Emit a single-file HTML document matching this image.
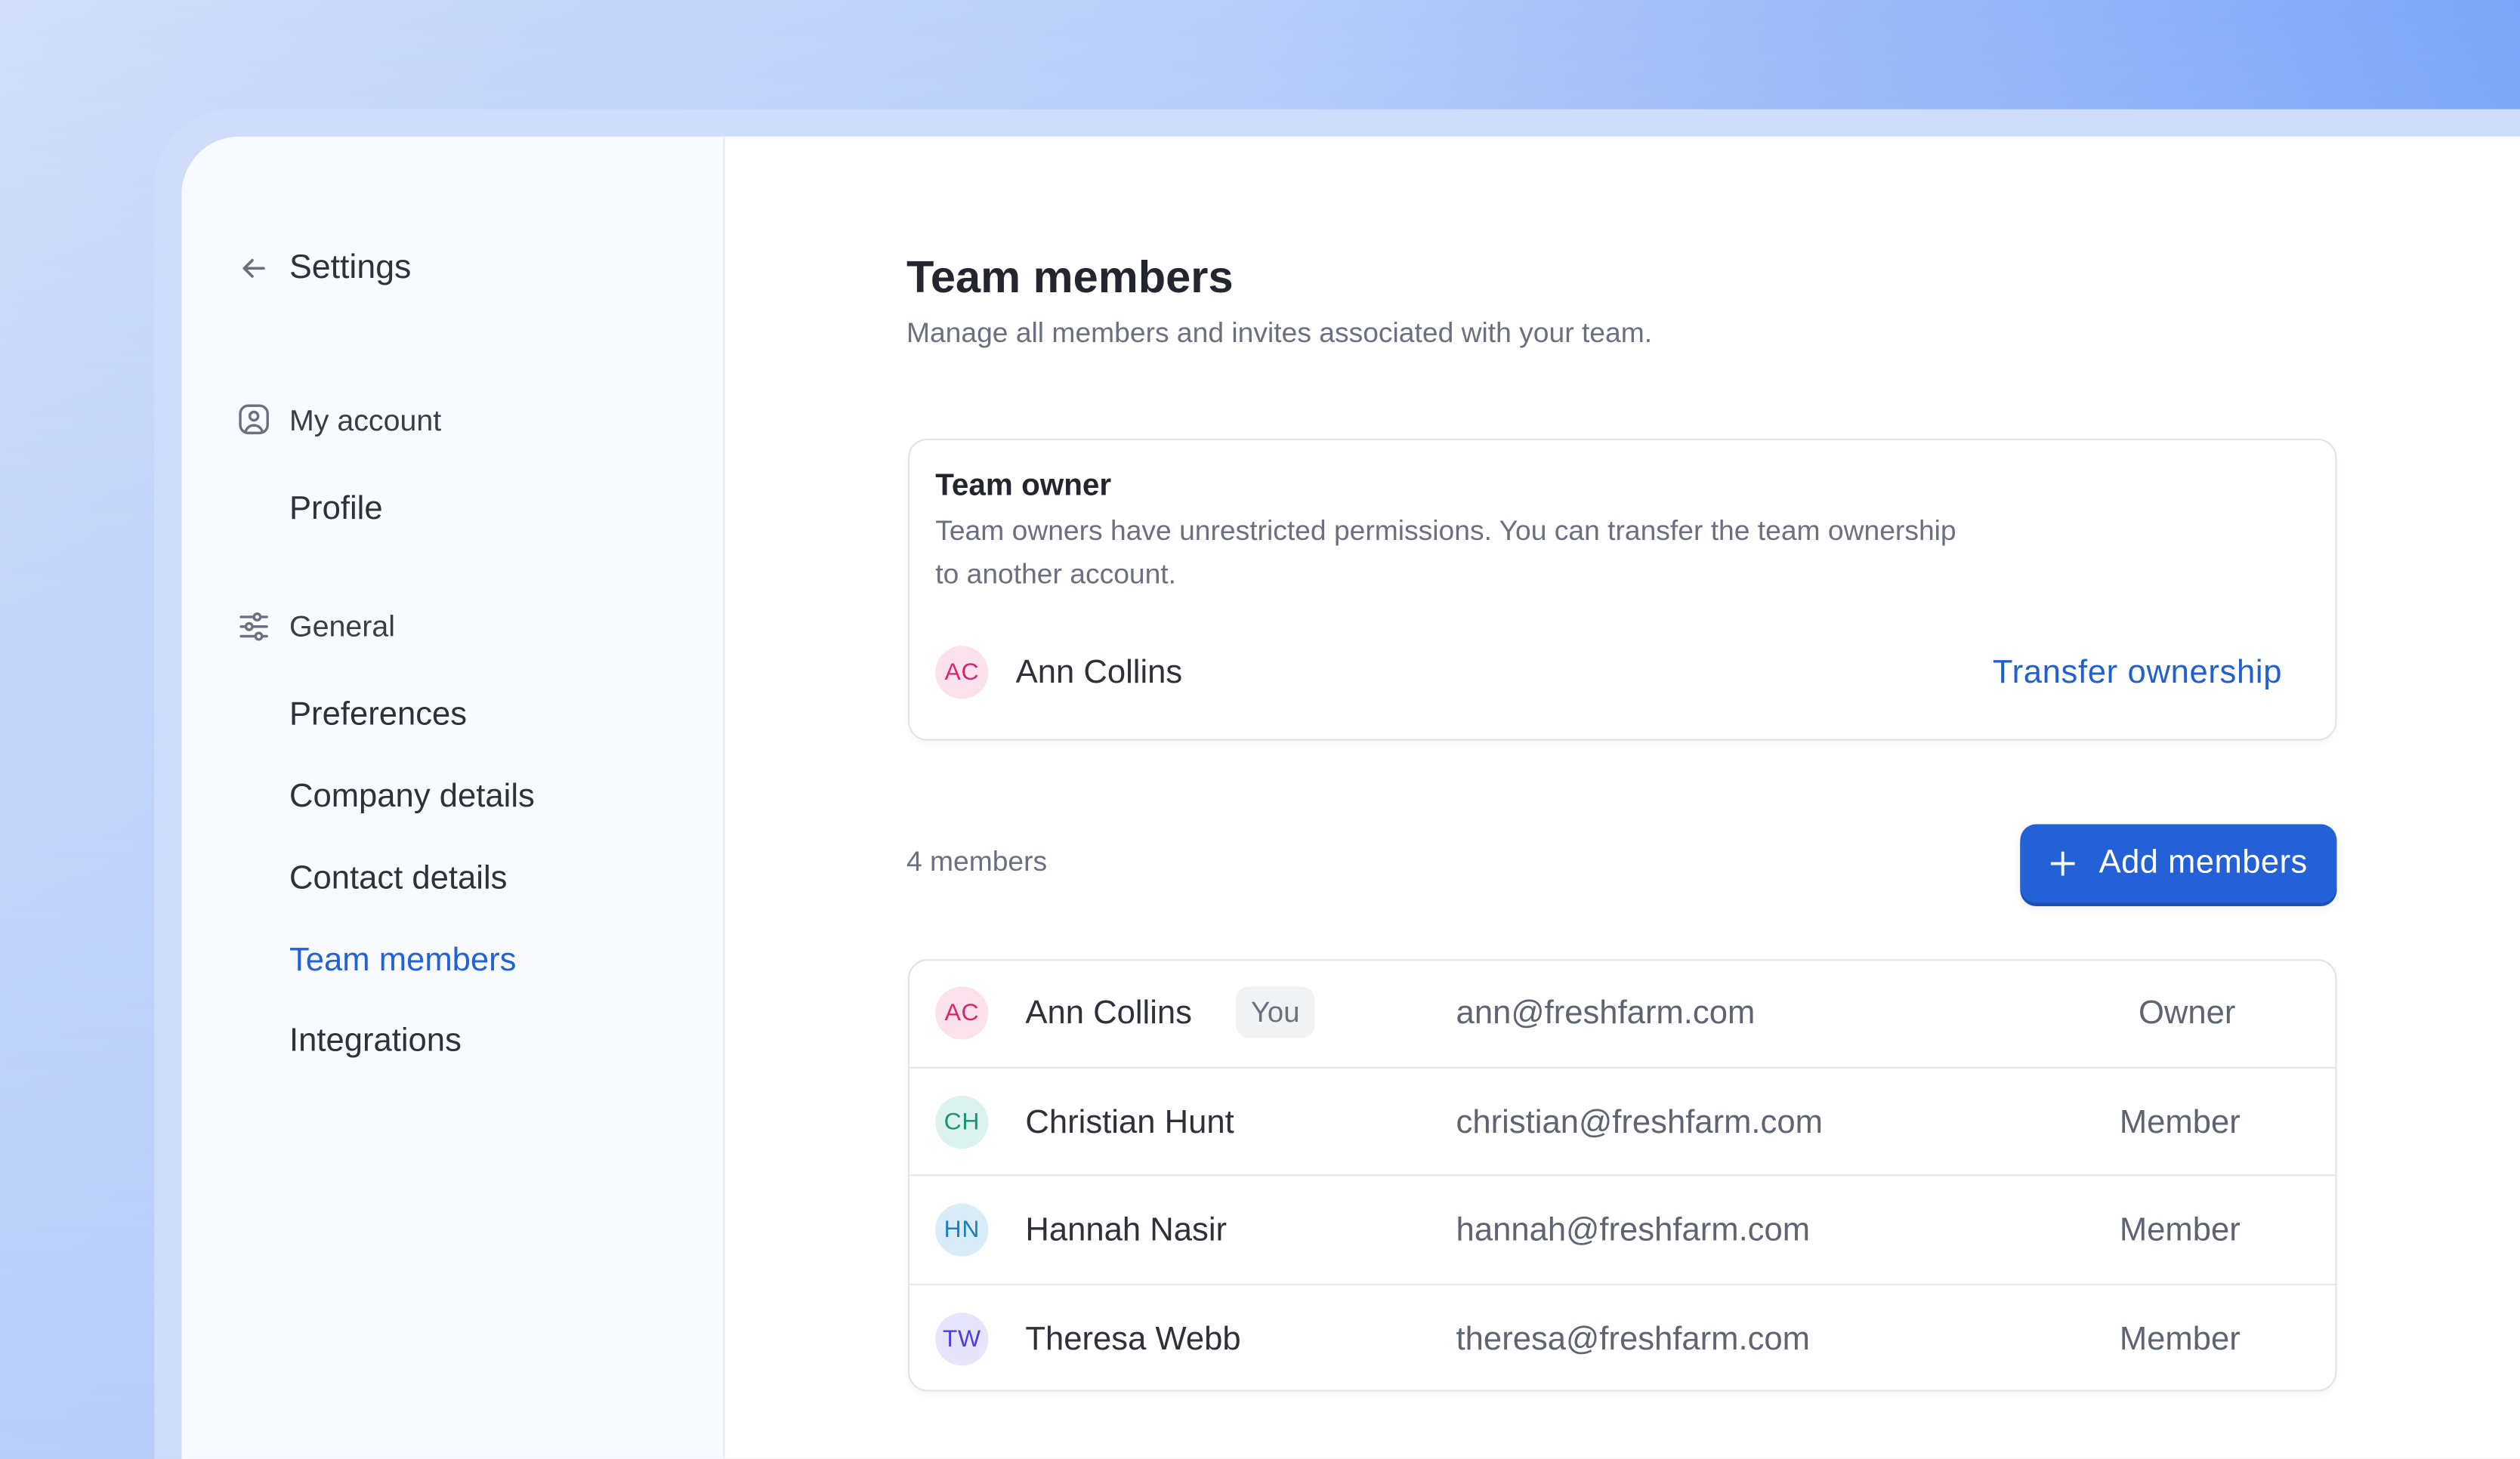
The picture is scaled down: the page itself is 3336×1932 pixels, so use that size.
<!DOCTYPE html>
<html><head><meta charset="utf-8"><style>
html,body{margin:0;padding:0;width:3336px;height:1932px;overflow:hidden}
body{background:linear-gradient(100deg,#d2dffc 0%,#b8cdfa 45%,#6f9ff6 100%)}
#w{position:absolute;left:0;top:0;width:1568px;height:908px;transform:scale(2.12755);transform-origin:0 0;font-family:"Liberation Sans",sans-serif;overflow:hidden}
.bgl{position:absolute;left:0;top:0;width:1568px;height:908px;background:linear-gradient(180deg,rgba(200,215,251,0) 0%,rgba(178,201,248,0.8) 100%)}
.frame{position:absolute;left:96px;top:68px;width:1600px;height:840px;border-radius:48px 0 0 0;background:#cfddfb}
.panel{position:absolute;left:113px;top:85px;width:1455px;height:823px;border-top-left-radius:36px;background:#fff;overflow:hidden}
.side{position:absolute;left:0;top:0;width:337px;height:823px;background:#f8faff;border-right:1px solid #e6e8ee}
.t{position:absolute;white-space:nowrap;line-height:1}
.nav{color:#2e313a;font-size:20.5px}
.g{color:#6b7080}
.av{position:absolute;width:33px;height:33px;border-radius:50%;font-size:15px;text-align:center;line-height:33px;letter-spacing:0.3px}
.row{position:absolute;left:0;width:889px;height:67px;border-top:1px solid #e4e5e9}
</style></head><body>
<div id="w">
<div class="bgl"></div>
<div class="frame"></div>
<div class="panel">
 <div class="side">
  <svg style="position:absolute;left:36px;top:73px" width="18" height="18" viewBox="0 0 18 18" fill="none" stroke="#6b7080" stroke-width="1.7" stroke-linecap="round" stroke-linejoin="round"><path d="M15 9H3M8 4L3 9l5 5"/></svg>
  <div class="t nav" style="left:67px;top:71px;font-size:21px">Settings</div>
  <svg style="position:absolute;left:35px;top:166px" width="20" height="20" viewBox="0 0 20 20" fill="none" stroke="#6b7080" stroke-width="1.6"><rect x="1.5" y="1.5" width="17" height="17" rx="5"/><circle cx="10" cy="8" r="2.6"/><path d="M4.8 17.5c1-2.6 3-3.8 5.2-3.8s4.2 1.2 5.2 3.8"/></svg>
  <div class="t" style="left:67px;top:168px;font-size:18.5px;color:#3a3d47">My account</div>
  <div class="t nav" style="left:67px;top:222px">Profile</div>
  <svg style="position:absolute;left:35px;top:295px" width="20" height="20" viewBox="0 0 20 20" fill="none" stroke="#6b7080" stroke-width="1.6" stroke-linecap="round"><path d="M2 4h16M2 10h16M2 16h16"/><circle cx="12" cy="4" r="2" fill="#f8faff"/><circle cx="7" cy="10" r="2" fill="#f8faff"/><circle cx="13" cy="16" r="2" fill="#f8faff"/></svg>
  <div class="t" style="left:67px;top:296px;font-size:18.5px;color:#3a3d47">General</div>
  <div class="t nav" style="left:67px;top:350px">Preferences</div>
  <div class="t nav" style="left:67px;top:401px">Company details</div>
  <div class="t nav" style="left:67px;top:452px">Contact details</div>
  <div class="t nav" style="left:67px;top:503px;color:#2362d4">Team members</div>
  <div class="t nav" style="left:67px;top:553px">Integrations</div>
 </div>
 <div class="t" style="left:451px;top:74px;font-size:28px;font-weight:600;color:#23262e">Team members</div>
 <div class="t g" style="left:451px;top:114px;font-size:17.5px">Manage all members and invites associated with your team.</div>

 <div style="position:absolute;left:452px;top:188px;width:887px;height:186px;border:1px solid #e2e3e7;border-radius:12px;box-shadow:0 2px 4px rgba(0,0,0,0.04)">
  <div class="t" style="left:16px;top:19px;font-size:19px;font-weight:600;color:#23262e">Team owner</div>
  <div class="t g" style="left:16px;top:43px;font-size:17.5px;line-height:27px;white-space:normal;width:640px">Team owners have unrestricted permissions. You can transfer the team ownership to another account.</div>
  <div class="av" style="left:16px;top:128px;background:#fbe1ec;color:#d6246e">AC</div>
  <div class="t" style="left:66px;top:135px;font-size:20.5px;color:#2e313a">Ann Collins</div>
  <div class="t" style="right:33px;top:135px;font-size:20.5px;color:#2160d3;letter-spacing:0.3px">Transfer ownership</div>
 </div>

 <div class="t g" style="left:451px;top:443px;font-size:17.5px">4 members</div>
 <div style="position:absolute;left:1144px;top:428px;width:197px;height:49px;border-radius:10px;background:#2461d6;box-shadow:0 2px 0 #1d4fb0,0 3px 6px rgba(0,0,0,0.08)">
  <svg style="position:absolute;left:19px;top:17px" width="15" height="15" viewBox="0 0 15 15" stroke="#fff" stroke-width="1.8"><path d="M7.5 0v15M0 7.5h15"/></svg>
  <div class="t" style="left:49px;top:14px;font-size:20.5px;color:#fff;letter-spacing:0.2px">Add members</div>
 </div>

 <div style="position:absolute;left:452px;top:512px;width:887px;height:267px;border:1px solid #e2e3e7;border-radius:12px;overflow:hidden;box-shadow:0 2px 4px rgba(0,0,0,0.04)">
  <div class="row" style="top:-1px;border-top:none">
   <div class="av" style="left:16px;top:17px;background:#fbe1ec;color:#d6246e">AC</div>
   <div class="t" style="left:72px;top:24px;font-size:20.5px;color:#2e313a">Ann Collins</div>
   <div style="position:absolute;left:203px;top:17px;width:49px;height:32px;border-radius:8px;background:#f1f2f4;color:#6b7080;font-size:18px;text-align:center;line-height:32px">You</div>
   <div class="t" style="left:340px;top:24px;font-size:20.5px;color:#5f6473">ann@freshfarm.com</div>
   <div class="t" style="right:64px;top:24px;font-size:20.5px;color:#5f6473">Owner</div>
  </div>
  <div class="row" style="top:66px">
   <div class="av" style="left:16px;top:17px;background:#dbf2ee;color:#1b9379">CH</div>
   <div class="t" style="left:72px;top:24px;font-size:20.5px;color:#2e313a">Christian Hunt</div>
   <div class="t" style="left:340px;top:24px;font-size:20.5px;color:#5f6473">christian@freshfarm.com</div>
   <div class="t" style="right:61px;top:24px;font-size:20.5px;color:#5f6473">Member</div>
  </div>
  <div class="row" style="top:133px">
   <div class="av" style="left:16px;top:17px;background:#daecf8;color:#1a80c2">HN</div>
   <div class="t" style="left:72px;top:24px;font-size:20.5px;color:#2e313a">Hannah Nasir</div>
   <div class="t" style="left:340px;top:24px;font-size:20.5px;color:#5f6473">hannah@freshfarm.com</div>
   <div class="t" style="right:61px;top:24px;font-size:20.5px;color:#5f6473">Member</div>
  </div>
  <div class="row" style="top:201px">
   <div class="av" style="left:16px;top:17px;background:#e7e5fc;color:#4b3fdc">TW</div>
   <div class="t" style="left:72px;top:24px;font-size:20.5px;color:#2e313a">Theresa Webb</div>
   <div class="t" style="left:340px;top:24px;font-size:20.5px;color:#5f6473">theresa@freshfarm.com</div>
   <div class="t" style="right:61px;top:24px;font-size:20.5px;color:#5f6473">Member</div>
  </div>
 </div>
</div>
</div>
</body></html>
